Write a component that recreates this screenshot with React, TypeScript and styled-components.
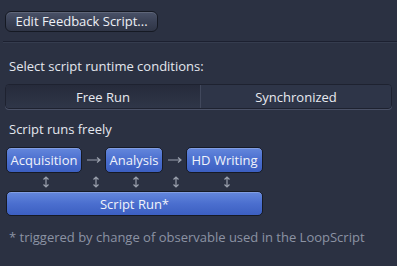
import styled, { createGlobalStyle } from 'styled-components';

const GlobalStyle = createGlobalStyle`
  html, body {
    margin: 0;
    padding: 0;
    background: #2b3142;
  }
  body {
    font-family: "Open Sans", "Noto Sans", sans-serif;
    color: #e4e7ee;
  }
`;

const VArrow = () => (
  <svg width="6" height="12" viewBox="0 0 6 12">
    <path d="M3 1 V11 M0.5 3.5 L3 1 L5.5 3.5 M0.5 8.5 L3 11 L5.5 8.5" stroke="#9aa0ad" strokeWidth="1.2" fill="none" />
  </svg>
);

const HArrow = () => (
  <svg width="14" height="8" viewBox="0 0 14 8">
    <path d="M0 4 H13 M10 1.5 L13 4 L10 6.5" stroke="#9aa0ad" strokeWidth="1.2" fill="none" />
  </svg>
);

const App = () => {
  return (
    <>
      <GlobalStyle />
      <Panel>
        <Top>
          <EditButton>Edit Feedback Script...</EditButton>
        </Top>
        <Separator />
        <Label>Select script runtime conditions:</Label>
        <Segmented>
          <Segment $active>Free Run</Segment>
          <Segment>Synchronized</Segment>
        </Segmented>
        <Label $small>Script runs freely</Label>
        <Flow>
          <StageRow>
            <Stage $w={76}>Acquisition</Stage>
            <Arrow><HArrow /></Arrow>
            <Stage $w={58}>Analysis</Stage>
            <Arrow><HArrow /></Arrow>
            <Stage $w={77}>HD Writing</Stage>
          </StageRow>
          <Links>
            <Link $x={37}><VArrow /></Link>
            <Link $x={87}><VArrow /></Link>
            <Link $x={127}><VArrow /></Link>
            <Link $x={167}><VArrow /></Link>
            <Link $x={218}><VArrow /></Link>
          </Links>
          <RunBar>Script Run*</RunBar>
        </Flow>
        <Note>* triggered by change of observable used in the LoopScript</Note>
      </Panel>
    </>
  );
};

const Panel = styled.div`
  width: 397px;
  height: 266px;
  box-sizing: border-box;
  padding: 11px 5px 0 5px;
  display: flex;
  flex-direction: column;
`;

const Top = styled.div`
  display: flex;
`;

const EditButton = styled.button`
  width: 153px;
  height: 21px;
  padding: 0;
  border: 1px solid #151923;
  border-radius: 6px;
  background: linear-gradient(#4a5268 0%, #3a4155 50%, #2f3546 100%);
  box-shadow: inset 0 1px 0 rgba(255, 255, 255, 0.12);
  color: #eef0f5;
  font-family: inherit;
  font-size: 13px;
  line-height: 19px;
  text-align: center;
`;

const Separator = styled.div`
  height: 1px;
  margin: 9px -5px 0 -2px;
  background: #1c2030;
  border-bottom: 1px solid #353c4e;
`;

const Label = styled.div<{ $small?: boolean }>`
  margin: ${({ $small }) => ($small ? '11px 0 0 4px' : '14px 0 0 4px')};
  font-size: 13px;
  line-height: 18px;
  color: #e4e7ee;
`;

const Segmented = styled.div`
  display: grid;
  grid-template-columns: 195px 1fr;
  height: 23px;
  margin-top: 9px;
  border: 1px solid #1e2230;
  border-radius: 4px;
  overflow: hidden;
  background: #2e3548;
  box-shadow: 0 1px 0 #4a5166;
`;

const Segment = styled.div<{ $active?: boolean }>`
  display: flex;
  align-items: center;
  justify-content: center;
  font-size: 13px;
  color: #e8eaf0;
  background: ${({ $active }) =>
    $active ? 'linear-gradient(#262b3b, #2f3648)' : '#2e3548'};
  border-right: ${({ $active }) => ($active ? '1px solid #41485c' : 'none')};
`;

const Flow = styled.div`
  display: flex;
  flex-direction: column;
  width: 257px;
  margin: 9px 0 0 1px;
`;

const StageRow = styled.div`
  display: flex;
  align-items: center;
`;

const blue = `
  border: 1px solid #161a24;
  border-radius: 5px;
  background: linear-gradient(#6487dc 0%, #4b6fcf 50%, #3c5fc1 100%);
  box-shadow: inset 0 1px 0 rgba(255, 255, 255, 0.2);
  color: #f0f3fa;
  font-size: 13px;
  display: flex;
  align-items: center;
  justify-content: center;
  box-sizing: border-box;
`;

const Stage = styled.div<{ $w: number }>`
  ${blue};
  width: ${({ $w }) => $w}px;
  height: 26px;
`;

const Arrow = styled.div`
  display: flex;
  align-items: center;
  justify-content: center;
  width: 23px;
`;

const Links = styled.div`
  position: relative;
  height: 18px;
`;

const Link = styled.div<{ $x: number }>`
  position: absolute;
  top: 3px;
  left: ${({ $x }) => $x}px;
  line-height: 0;
`;

const RunBar = styled.div`
  ${blue};
  height: 25px;
  width: 257px;
`;

const Note = styled.div`
  margin: 12px 0 0 4px;
  font-size: 13px;
  color: #8c93a4;
`;

export default App;
